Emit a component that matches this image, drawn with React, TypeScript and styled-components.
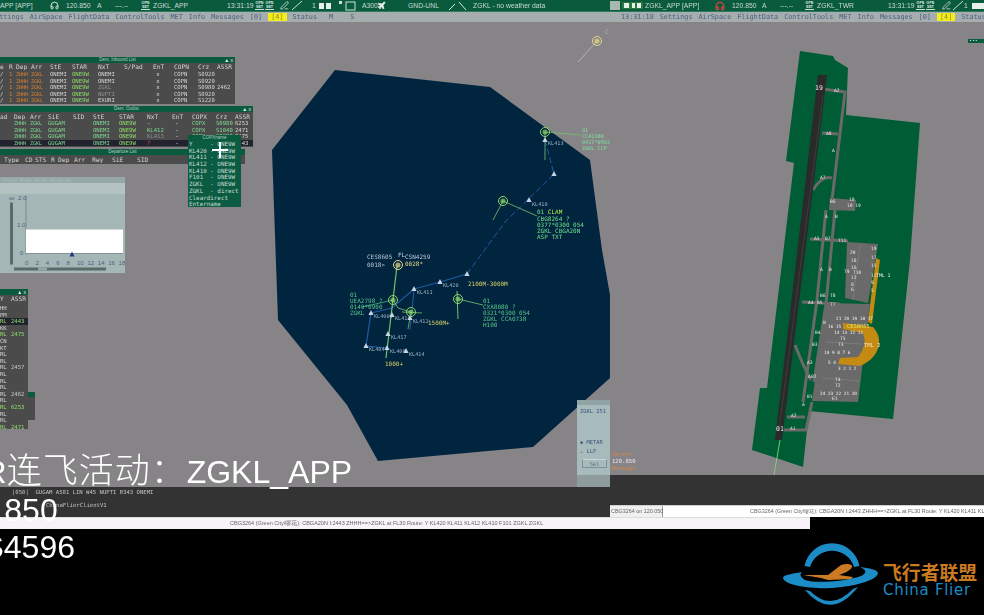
import React from "react"
import styled, { createGlobalStyle } from "styled-components"
import { Headphones, Plane, PenLine } from "lucide-react"

const MONO = `"DejaVu Sans Mono", "Liberation Mono", monospace`
const SANS = `"Liberation Sans", Arial, sans-serif`

const GlobalStyle = createGlobalStyle`
  html, body { margin: 0; padding: 0; background: #000; }
  #root { width: 984px; height: 615px; overflow: hidden; }
  * { box-sizing: border-box; }
`

const Page = styled.div`
  position: relative;
  width: 984px;
  height: 615px;
  background: #000;
  overflow: hidden;
  font-family: ${SANS};
  display: flex;
  flex-direction: column;
`
const Desktop = styled.div`
  display: flex;
  flex-direction: column;
  filter: blur(0.45px);
`
const Clients = styled.div`
  display: flex;
  height: 517px;
`
const Client = styled.div<{ $w: number }>`
  width: ${(p) => p.$w}px;
  display: flex;
  flex-direction: column;
  overflow: hidden;
`
const TopBar = styled.div`
  height: 12px;
  background: #0a5a3e;
  border-bottom: 1px solid #2f7a5f;
  display: flex;
  align-items: center;
  color: #c9dbd3;
  font-size: 6.8px;
  white-space: nowrap;
  flex: none;
`
const Cell = styled.div<{ $w: number }>`
  width: ${(p) => p.$w}px;
  flex: none;
  display: flex;
  align-items: center;
  gap: 1px;
`
const SetBadge = styled.span`
  display: inline-block;
  width: 9px;
  height: 9px;
  font-size: 3.6px;
  font-weight: bold;
  line-height: 4.2px;
  text-align: center;
  color: #dfeae5;
  border-bottom: 1px solid #d0ddd7;
`
const MenuBar = styled.div<{ $offset: number }>`
  height: 10px;
  background: #a5adae;
  display: flex;
  align-items: center;
  gap: 6px;
  padding-left: ${(p) => Math.max(p.$offset, 0)}px;
  margin-left: ${(p) => Math.min(p.$offset, 0)}px;
  font-family: ${MONO};
  font-size: 6.8px;
  color: #4d6082;
  white-space: nowrap;
  flex: none;
`
const MenuItem = styled.span<{ $hot?: boolean; $gap?: number }>`
  ${(p) => (p.$hot ? "background:#f4ec1c;color:#8a8a20;padding:0 3px;" : "")}
  ${(p) => (p.$gap ? `margin-left:${p.$gap}px;` : "")}
`
const ClockChip = styled.span`
  width: 6px;
  height: 10px;
  background: #e4e8e8;
  margin-right: 5px;
`
const Scope = styled.div`
  position: relative;
  flex: 1;
  background: #868486;
  overflow: hidden;
`
const ScopeDrawing = styled.svg`
  position: absolute;
  inset: 0;
  display: block;
  text {
    font-family: ${MONO};
    font-size: 6px;
  }
`
const FloatWin = styled.div<{ $x: number; $y: number; $w: number; $h: number; $bg?: string }>`
  position: absolute;
  left: ${(p) => p.$x}px;
  top: ${(p) => p.$y}px;
  width: ${(p) => p.$w}px;
  height: ${(p) => p.$h}px;
  background: ${(p) => p.$bg ?? "#4b4b4b"};
  display: flex;
  flex-direction: column;
  font-family: ${MONO};
  font-size: 6.3px;
  color: #dcdcdc;
  white-space: nowrap;
  overflow: hidden;
`
const WinTitle = styled.div`
  height: 6px;
  flex: none;
  background: #0a5a3e;
  color: #b7cdc4;
  font-family: ${SANS};
  font-size: 4.5px;
  line-height: 6px;
  text-align: center;
  position: relative;
`
const WinButtons = styled.span`
  position: absolute;
  right: 2px;
  top: 0;
  color: #e8e8e8;
  font-size: 5px;
`
const GridRow = styled.div<{ $cols: string; $h: number; $sel?: boolean }>`
  display: grid;
  grid-template-columns: ${(p) => p.$cols};
  height: ${(p) => p.$h}px;
  line-height: ${(p) => p.$h}px;
  flex: none;
  background: ${(p) => (p.$sel ? "#232330" : "transparent")};
`
const GridCell = styled.span<{ $c?: string; $s?: number }>`
  color: ${(p) => p.$c ?? "#d4d4d4"};
  font-size: ${(p) => p.$s ?? 5.6}px;
  overflow: hidden;
`
const HeadCell = styled.span`
  color: #d4d4d4;
  font-size: 6.2px;
  overflow: hidden;
`
const HeaderGap = styled.div<{ $h: number }>`
  height: ${(p) => p.$h}px;
  flex: none;
`
const PopupRow = styled.div`
  height: 6.7px;
  line-height: 6.7px;
  padding-left: 1px;
  font-size: 5.9px;
  color: #c7dfd2;
  white-space: pre;
`
const ChartBar = styled.div`
  height: 6px;
  background: #96a8a9;
  color: #aebcbc;
  font-size: 5px;
  line-height: 6px;
  padding-left: 2px;
  flex: none;
`
const ChartTool = styled.div`
  height: 11px;
  background: #b3c2c2;
  flex: none;
`
const ChartBody = styled.svg`
  display: block;
  flex: 1;
  text {
    font-family: ${SANS};
    font-size: 6px;
    fill: #4c5f7c;
  }
`
const Tab = styled.div`
  position: absolute;
  left: 28px;
  top: 370px;
  width: 7px;
  height: 28px;
  background: #4b4b4b;
  border-top: 5px solid #0a5a3e;
`
const SidePanel = styled.div`
  position: absolute;
  left: 577px;
  top: 378px;
  width: 33px;
  height: 87px;
  background: #a7babc;
  display: flex;
  flex-direction: column;
  font-family: ${MONO};
  font-size: 5.4px;
  color: #3d5478;
  white-space: nowrap;
  overflow: hidden;
`
const PanelHead = styled.div`
  height: 5px;
  background: #90a4a6;
  margin-bottom: 2px;
`
const PanelLine = styled.div<{ $mt?: number }>`
  margin-top: ${(p) => p.$mt ?? 0}px;
  padding-left: 3px;
  line-height: 9px;
`
const SelButton = styled.div`
  margin: 3px 3px 0 5px;
  height: 9px;
  border: 1px solid #7e9294;
  border-top-color: #c8d5d6;
  text-align: center;
  line-height: 8px;
  color: #5e7476;
`
const PanelFoot = styled.div`
  margin-top: auto;
  height: 12px;
  background: #8f9c9e;
`
const ServerNote = styled.div`
  position: absolute;
  left: 2px;
  bottom: 3px;
  font-family: ${MONO};
  font-size: 5.6px;
  line-height: 7px;
  color: #d98a4a;
`
const ServerFreq = styled.div`
  color: #e8e8e8;
`
const Corner = styled.div`
  position: absolute;
  right: 0;
  top: 17px;
  width: 16px;
  height: 4px;
  background: #0a5a3e;
  color: #d8e8e0;
  font-size: 4px;
  line-height: 4px;
  letter-spacing: 1.5px;
  padding-left: 2px;
`
const CommandBar = styled.div<{ $h: number }>`
  height: ${(p) => p.$h}px;
  background: #333333;
  flex: none;
  font-family: ${MONO};
  font-size: 5.6px;
  color: #c4c4c4;
  white-space: pre;
  display: flex;
  flex-direction: column;
`
const CommandLine = styled.div<{ $pad: number; $mt?: number }>`
  padding-left: ${(p) => p.$pad}px;
  margin-top: ${(p) => p.$mt ?? 0}px;
  line-height: 7px;
`
const InputStrip = styled.div`
  height: 12px;
  background: #fff;
  border-top: 1px solid #cfcfcf;
  display: flex;
  align-items: center;
  font-size: 5.4px;
  color: #666;
  white-space: nowrap;
  flex: none;
`
const StripLabel = styled.div`
  width: 53px;
  padding-left: 1px;
  border-right: 1px solid #999;
  height: 100%;
  line-height: 10px;
  background: #f0f0f0;
  flex: none;
`
const StripBlank = styled.div`
  width: 87px;
  flex: none;
`
const BottomStrip = styled.div`
  width: 810px;
  height: 12px;
  background: #f7f3f8;
  border-top: 1px solid #ddd;
  font-size: 5.5px;
  line-height: 11px;
  color: #666;
  padding-left: 230px;
  white-space: nowrap;
  flex: none;
  overflow: hidden;
  filter: blur(0.45px);
`
const Footer = styled.div`
  flex: 1;
  display: flex;
  justify-content: flex-end;
  align-items: flex-start;
  padding: 13px 7px 0 0;
  gap: 4px;
`
const LogoText = styled.div`
  display: flex;
  flex-direction: column;
  margin-top: 19px;
`
const LogoCn = styled.div`
  font-family: "Noto Sans CJK SC", sans-serif;
  font-weight: 700;
  font-size: 18.8px;
  line-height: 21px;
  color: #c97a22;
`
const LogoEn = styled.div`
  font-family: "DejaVu Sans", sans-serif;
  font-size: 15px;
  line-height: 16px;
  letter-spacing: 0.7px;
  color: #1b8cc6;
`
const Captions = styled.div`
  position: absolute;
  left: 0;
  top: 454px;
  font-family: ${SANS}, "Noto Sans CJK SC";
  font-size: 32px;
  line-height: 37.5px;
  color: #fff;
  font-weight: 300;
  white-space: nowrap;
`
const Caption = styled.div<{ $x: number }>`
  margin-left: ${(p) => p.$x}px;
  height: 37.5px;
`
const CaptionCjk = styled.span`
  font-size: 35px;
  letter-spacing: 1px;
  line-height: 0;
`
const Crosshair = styled.svg`
  position: absolute;
  left: 212px;
  top: 120px;
`

const W = "#d6d6d6"
const O = "#d9802c"
const G = "#8ede68"
const M = "#7edc93"
const D = "#8f8f8f"

const colsA = "9px 7px 15px 19px 22px 26px 26px 29px 21px 24px 19px 18px"
const headA = ["e", "R", "Dep", "Arr", "StE", "STAR", "NxT", "S/Pad", "EnT", "COPN", "Crz", "ASSR"]
const rowsA: [string, string, string, string, string, string][] = [
  ["ONEMI", "ONE9W", "ONEMI", "S0920", "", W],
  ["ONEMI", "ONE9W", "ONEMI", "S0920", "", W],
  ["ONEMI", "ONE9W", "ZGKL", "S0980", "2462", D],
  ["ONEMI", "ONE9W", "NUPTI", "S0920", "", D],
  ["ONEMI", "ONE9W", "EXURI", "S1220", "", W],
]

const colsB = "14px 16px 18px 25px 20px 26px 28px 25px 20px 24px 19px 18px"
const headB = ["ad", "Dep", "Arr", "SiE", "SID", "StE", "STAR", "NxT", "EnT", "COPX", "Crz", "ASSR"]
const rowsB = [
  { nxt: "-", nxtC: W, crz: "S0980", assr: "6253" },
  { nxt: "KL412", nxtC: M, crz: "S1040", assr: "2471" },
  { nxt: "KL413", nxtC: D, crz: "S0980", assr: "2475" },
  { nxt: "?", nxtC: "#d8434a", crz: "", assr: "2443" },
]

const colsC = "4px 21px 10px 16px 7px 16px 18px 20px 25px 23px"
const headC = ["", "Type", "CD", "STS", "R", "Dep", "Arr", "Rwy", "SiE", "SID"]

const popupItems = [
  "Y     - ONE9W",
  "KL420 - ONE9W",
  "KL411 - ONE9W",
  "KL412 - ONE9W",
  "KL410 - ONE9W",
  "F101  - ONE9W",
  "ZGKL  - ONE9W",
  "ZGKL  - direct",
  "Cleardirect",
  "Entername",
]

const sideRows: [string, string, string?][] = [
  ["HH", ""], ["PM", ""], ["RL", "2443", G], ["KK", ""], ["RL", "2475", G], ["CN", ""], ["KT", ""],
  ["RL", ""], ["RL", ""], ["RL", "2457"], ["RL", ""], ["RL", ""], ["RL", ""], ["RL", "2462"], ["RL", ""],
  ["RL", "6253", G], ["RL", ""], ["RL", ""], ["RL", "2471", G],
]

type Wp = [number, number, string?, number?, number?]
const waypoints: Wp[] = [
  [467, 274], [440, 282, "KL420", 3, 5], [414, 289, "KL411", 3, 5], [371, 313, "KL4000", 3, 5],
  [366, 346, "KL404", 3, 5], [388, 334, "KL417", 3, 5], [387, 348, "KL406", 3, 5], [406, 351, "KL414", 3, 5],
  [392, 315, "KL410", 3, 5], [410, 318, "KL412", 3, 5], [554, 174], [529, 200, "KL410", 3, 6], [545, 140, "KL413", 3, 5],
]

function Waypoint({ x, y, label, dx = 3, dy = 5 }: { x: number; y: number; label?: string; dx?: number; dy?: number }) {
  return (
    <g>
      <polygon points={`${x},${y - 3} ${x + 2.6},${y + 2} ${x - 2.6},${y + 2}`} fill="#c8d4e4" />
      {label && <text x={x + dx} y={y + dy} fill="#9fb4c8" style={{ fontSize: 5.2 }}>{label}</text>}
    </g>
  )
}

function Target({ x, y, color = "#8fd66a" }: { x: number; y: number; color?: string }) {
  return (
    <g>
      <circle cx={x} cy={y} r={4.5} fill="none" stroke={color} strokeWidth={1} />
      <circle cx={x} cy={y} r={2.6} fill={color} opacity={0.7} />
    </g>
  )
}

function Tag({ x, y, lines, color = "#59c38a", pitch = 6.1, size = 6 }: { x: number; y: number; lines: string[]; color?: string; pitch?: number; size?: number }) {
  return (
    <>
      {lines.map((l, i) => (
        <text key={i} x={x} y={y + i * pitch} fill={color} style={{ fontSize: size }}>{l}</text>
      ))}
    </>
  )
}

function RadarMap() {
  return (
    <ScopeDrawing width={610} height={465} viewBox="0 22 610 465">
      <polygon points="335,70 490,87 590,160 602,250 610,295 610,378 533,447 378,461 347,405 278,320 272,150" fill="#02253f" />
      {/* routes */}
      <polyline points="545,140 554,174 505,222 467,274" fill="none" stroke="#1e5aa6" strokeWidth={1} strokeDasharray="6 3" />
      <polyline points="467,274 440,282 414,289 392,308 371,313 366,346 387,348" fill="none" stroke="#1e5aa6" strokeWidth={1.2} />
      <polyline points="414,289 410,330" fill="none" stroke="#1e5aa6" strokeWidth={1} />
      <polyline points="598,40 578,62" fill="none" stroke="#c8c8c8" strokeWidth={0.7} />
      {/* localiser and vectors */}
      <line x1={397} y1={266} x2={386} y2={358} stroke="#74c46c" strokeWidth={1.2} />
      <line x1={393} y1={300} x2={362} y2={307} stroke="#48b878" strokeWidth={0.8} />
      <polyline points="393,300 398,308 411,312" fill="none" stroke="#74c46c" strokeWidth={0.8} />
      <line x1={402} y1={312} x2={422} y2={313} stroke="#74c46c" strokeWidth={0.8} />
      <line x1={411} y1={312} x2={408} y2={329} stroke="#74c46c" strokeWidth={0.8} />
      <line x1={457} y1={291} x2={458} y2={319} stroke="#74c46c" strokeWidth={1} />
      <line x1={458} y1={299} x2={483} y2={305} stroke="#74c46c" strokeWidth={0.8} />
      <line x1={503} y1={201} x2={493} y2={220} stroke="#74c46c" strokeWidth={0.8} />
      <line x1={503} y1={201} x2={537} y2={216} stroke="#74c46c" strokeWidth={0.8} />
      <line x1={545} y1={132} x2={545} y2={160} stroke="#74c46c" strokeWidth={0.8} />
      <line x1={545} y1={132} x2={581} y2={135} stroke="#74c46c" strokeWidth={0.8} />
      {waypoints.map(([x, y, label, dx, dy], i) => (
        <Waypoint key={i} x={x} y={y} label={label} dx={dx} dy={dy} />
      ))}
      <Target x={393} y={300} />
      <Target x={411} y={312} />
      <Target x={458} y={299} />
      <Target x={503} y={201} />
      <Target x={545} y={132} />
      <Target x={398} y={265} color="#e8d98a" />
      <Target x={597} y={41} color="#e6d888" />
      <text x={605} y={34} fill="#b0b0b0">C</text>
      <text x={398} y={257} fill="#cfd8e6">FL</text>
      <Tag x={367} y={259} color="#b9c8d8" pitch={8} lines={["CES8605", "0018>"]} />
      <Tag x={405} y={259} color="#b9c8d8" pitch={8} lines={["CSN4259", ""]} />
      <text x={405} y={266} fill="#e8dc8a">0028*</text>
      <Tag x={350} y={297} lines={["01", "UEA2798 ?", "0149*0900", "ZGKL"]} />
      <Tag x={483} y={303} lines={["01", "CXA8080 ?", "0321*0300 054", "ZGKL CCA0738", "H100"]} />
      <Tag x={582} y={132} color="#7fe0a0" size={5.2} lines={["01", "CCA1388", "0417*0592", "ZGKL CCP"]} />
      <text x={537} y={214} fill="#6fe08a">01 <tspan fill="#b6f04a">CLAM</tspan></text>
      <Tag x={537} y={221} color="#6fe08a" lines={["CBG8264 ?", "0377*0300 054", "ZGKL CBGA20N", "ASP TXT"]} />
      <text x={468} y={286} fill="#d8d264">2100M-3000M</text>
      <text x={428} y={325} fill="#d8d264">1500M+</text>
      <text x={385} y={366} fill="#d8d264">1000+</text>
    </ScopeDrawing>
  )
}

function AirportMap() {
  const labels: [number, number, string][] = [
    [834, 92, "A2"], [826, 135, "A8"], [832, 152, "A"], [820, 179, "A7"], [830, 203, "B6"], [849, 201, "10"], [847, 207, "10 19"],
    [825, 218, "A"], [835, 218, "B"], [814, 240, "A5"], [825, 240, "B7"], [838, 242, "T11"], [871, 250, "19"], [850, 254, "20"],
    [871, 259, "17"], [851, 262, "18"], [871, 267, "15"], [851, 269, "16"], [820, 271, "A"], [829, 271, "B"], [844, 273, "T9"], [853, 274, "T10"],
    [851, 279, "12"], [871, 277, "11"], [851, 286, "8"], [871, 284, "9"], [851, 291, "6"], [871, 292, "5"],
    [820, 297, "B6"], [830, 297, "T8"], [808, 304, "A4"], [817, 304, "B5"], [830, 306, "T7"], [823, 324, "B"], [815, 334, "B4"], [840, 340, "T5"],
    [812, 346, "B3"], [838, 346, "T3"], [807, 364, "A3"], [808, 378, "A"], [811, 378, "B2"], [835, 381, "T4"], [835, 387, "T2"], [807, 398, "B1"],
    [832, 400, "E1"], [802, 406, "A"], [791, 417, "A2"], [790, 430, "A1"],
  ]
  const stands: [number, number, string][] = [
    [836, 320, "21 20 19 18 17"], [828, 328, "16 15"], [834, 334, "14 13 12 11"], [824, 354, "10 9 8 7 6"], [828, 364, "5 4"], [838, 370, "3 2 1 2"], [820, 395, "24 23 22 21 20"],
  ]
  return (
    <ScopeDrawing width={374} height={453} viewBox="610 22 374 453">
      <polygon
        points="800,51 833,56 835,60 848,68 846,115 920,123 910,260 893,419 809,411 803,467 752,450 760,388 767,388 794,163 786,161"
        fill="#005c34"
      />
      {/* taxiways and aprons */}
      <g fill="none" stroke="#6a6a6a" strokeWidth={3}>
        <polyline points="816,88 845,92 832,200" />
        <line x1={822} y1={133} x2={838} y2={134} />
        <path d="M813,190 Q822,175 832,178" />
        <polyline points="826,210 817,300 803,402" />
        <polyline points="835,210 826,304 814,382" />
        <line x1={810} y1={239} x2={848} y2={241} />
        <line x1={802} y1={302} x2={840} y2={304} />
        <path d="M795,345 Q805,370 811,380" />
        <polyline points="812,402 806,430 784,430" />
        <line x1={787} y1={417} x2={805} y2={417} />
      </g>
      <polygon points="830,198 856,200 855,211 829,210" fill="#6a6a6a" />
      <polygon points="847,242 878,244 868,303 845,298" fill="#6a6a6a" />
      <polygon points="826,303 870,304 858,402 812,401" fill="#6a6a6a" />
      <g stroke="#8a8a8a" strokeWidth={0.5}>
        <line x1={860} y1={245} x2={853} y2={300} />
        <line x1={826} y1={342} x2={862} y2={344} />
        <line x1={822} y1={378} x2={860} y2={381} />
      </g>
      {/* runway */}
      <polygon points="818,75 827,75 782,440 775,440" fill="#2a2a2a" />
      <line x1={823} y1={95} x2={779} y2={430} stroke="#3d3d3d" strokeWidth={1} />
      {/* terminals */}
      <polygon points="876,258 880,260 872,324 868,322" fill="#c48a12" />
      <path d="M843,323 L873,327 Q880,335 879,343 Q878,358 860,366 L838,364 L840,358 L858,357 Q868,345 863,333 L843,329 Z" fill="#c48a12" />
      {labels.map(([x, y, t], i) => (
        <text key={i} x={x} y={y} fill="#e4e4e4" style={{ fontSize: 4.6 }}>{t}</text>
      ))}
      {stands.map(([x, y, t], i) => (
        <text key={i} x={x} y={y} fill="#f0f0f0" style={{ fontSize: 4.4 }}>{t}</text>
      ))}
      <text x={815} y={90} fill="#e8e8e8" style={{ fontSize: 6.5 }}>19</text>
      <text x={776} y={431} fill="#e8e8e8" style={{ fontSize: 6.5 }}>01</text>
      <text x={876} y={277} fill="#e8e8e8" style={{ fontSize: 4.8 }}>TML 1</text>
      <text x={864} y={347} fill="#f4e8c0" style={{ fontSize: 5.4 }}>TML 2</text>
      <text x={847} y={328} fill="#e8e860" style={{ fontSize: 5.4 }}>CES8665</text>
      <line x1={780} y1={440} x2={774} y2={475} stroke="#7fd47a" strokeWidth={0.9} />
    </ScopeDrawing>
  )
}

function TrackChart() {
  const ticks = [0, 2, 4, 6, 8, 10, 12, 14, 16, 18]
  return (
    <ChartBody width={125} height={78} viewBox="0 194 125 78">
      <rect x={10} y={202} width={3} height={62} fill="#5d6a6a" />
      <text x={9} y={199} style={{ fontSize: 4 }}>kM</text>
      <line x1={26} y1={195} x2={26} y2={254} stroke="#6e8080" strokeWidth={0.8} />
      <rect x={26} y={229} width={97} height={24} fill="#fff" />
      <line x1={26} y1={253} x2={123} y2={253} stroke="#6e8080" strokeWidth={0.8} />
      <text x={18} y={199}>2.0</text>
      <text x={17} y={226}>1.0</text>
      <text x={20} y={254}>0</text>
      {ticks.map((t) => (
        <text key={t} x={25 + t * 5.2} y={264}>{t}</text>
      ))}
      <polygon points="72,251 74.5,256 69.5,256" fill="#23308a" />
      <rect x={14} y={267} width={92} height={3} fill="#5d6a6a" />
      <rect x={38} y={267} width={9} height={3} fill="#94a6a6" />
    </ChartBody>
  )
}

function TopCells({ items }: { items: [number, React.ReactNode][] }) {
  return (
    <>
      {items.map(([w, node], i) => (
        <Cell key={i} $w={w}>{node}</Cell>
      ))}
    </>
  )
}

const setBadge = <SetBadge>OPN<br />SET</SetBadge>

const leftTop: [number, React.ReactNode][] = [
  [50, "APP [APP]"],
  [16, <Headphones size={9} color="#e8f0ec" strokeWidth={2.4} />],
  [31, "120.850"],
  [18, "A"],
  [26, "---.--"],
  [12, setBadge],
  [74, "ZGKL_APP"],
  [28, "13:31:19"],
  [10, setBadge],
  [15, setBadge],
  [11, <PenLine size={9} color="#dfe8e4" />],
  [21, <svg width="12" height="11"><path d="M1 10 L11 1" stroke="#cfe0d8" strokeWidth="1" /></svg>],
  [7, "1"],
  [19, <svg width="12" height="6"><rect x="0" y="0" width="12" height="6" fill="#e8f0ec" /><rect x="5" y="0" width="2" height="6" fill="#0a5a3e" /></svg>],
  [24, <svg width="22" height="11"><rect x="1" y="1" width="3" height="3" fill="#cfe0d8" /><rect x="8" y="2" width="9" height="8" fill="none" stroke="#cfe0d8" /></svg>],
  [15, "A300"],
  [31, <Plane size={9} color="#e8f0ec" fill="#e8f0ec" />],
  [40, "GND-UNL"],
  [25, <svg width="20" height="11"><path d="M1 10 L7 4 M11 2 L18 10" stroke="#dfe8e4" strokeWidth="1" /></svg>],
  [137, "ZGKL - no weather data"],
]

const rightTop: [number, React.ReactNode][] = [
  [12, <svg width="10" height="9"><rect width="10" height="9" fill="#a8b8b0" /></svg>],
  [23, <svg width="22" height="9"><rect x="0" y="1" width="21" height="7" fill="#2a7a40" /><rect x="2" y="2" width="5" height="5" fill="#e4f0e8" /><rect x="10" y="2" width="3" height="5" fill="#e4f0e8" /><rect x="15" y="2" width="4" height="5" fill="#e4f0e8" /></svg>],
  [70, "ZGKL_APP [APP]"],
  [17, <Headphones size={10} color="#d8434a" strokeWidth={3} />],
  [30, "120.850"],
  [18, "A"],
  [25, "---.--"],
  [12, setBadge],
  [71, "ZGKL_TWR"],
  [28, "13:31:19"],
  [10, setBadge],
  [16, setBadge],
  [10, <PenLine size={9} color="#dfe8e4" />],
  [12, <svg width="12" height="11"><path d="M1 10 L11 1" stroke="#cfe0d8" strokeWidth="1" /></svg>],
  [8, "1"],
  [12, <svg width="12" height="6"><rect width="12" height="6" fill="#e8f0ec" /></svg>],
]

const menuNames = ["AirSpace", "FlightData", "ControlTools", "MET", "Info", "Messages"]

function Menu() {
  return (
    <>
      {menuNames.map((m) => <MenuItem key={m}>{m}</MenuItem>)}
      <MenuItem>[0]</MenuItem>
      <MenuItem $hot>[4]</MenuItem>
      <MenuItem>Status</MenuItem>
      <MenuItem $gap={6}>M</MenuItem>
      <MenuItem $gap={11}>S</MenuItem>
    </>
  )
}

const statusLine = "CBG3264 (Green City/\u7F2A\u82B1): CBGA20N I:2443 ZHHH==>ZGKL at FL30 Route: Y KL420 KL411 KL412 KL410 F101 ZGKL ZGKL"

function FlightLists() {
  return (
    <>
      <FloatWin $x={0} $y={35} $w={235} $h={47}>
        <WinTitle>Dem. Inbound List<WinButtons>▲ x</WinButtons></WinTitle>
        <GridRow $cols={colsA} $h={7}>{headA.map((h) => <HeadCell key={h}>{h}</HeadCell>)}</GridRow>
        <HeaderGap $h={1} />
        {rowsA.map((r, i) => (
          <GridRow key={i} $cols={colsA} $h={6.6}>
            <GridCell>/</GridCell>
            <GridCell $c={O}>1</GridCell>
            <GridCell $c={O} $s={5}>ZHHH</GridCell>
            <GridCell $c={O} $s={5}>ZGKL</GridCell>
            <GridCell>{r[0]}</GridCell>
            <GridCell $c={G}>{r[1]}</GridCell>
            <GridCell $c={r[5]}>{r[2]}</GridCell>
            <GridCell />
            <GridCell>&nbsp;x</GridCell>
            <GridCell>COPN</GridCell>
            <GridCell>{r[3]}</GridCell>
            <GridCell>{r[4]}</GridCell>
          </GridRow>
        ))}
      </FloatWin>
      <FloatWin $x={0} $y={84} $w={253} $h={41}>
        <WinTitle>Dem. Outlist<WinButtons>▲ x</WinButtons></WinTitle>
        <HeaderGap $h={1} />
        <GridRow $cols={colsB} $h={7}>{headB.map((h) => <HeadCell key={h}>{h}</HeadCell>)}</GridRow>
        {rowsB.map((r, i) => (
          <GridRow key={i} $cols={colsB} $h={6.6} $sel={i === 3}>
            <GridCell />
            <GridCell $c={M} $s={5}>ZHHH</GridCell>
            <GridCell $c={M} $s={5}>ZGKL</GridCell>
            <GridCell $c={M}>GUGAM</GridCell>
            <GridCell />
            <GridCell $c={M}>ONEMI</GridCell>
            <GridCell $c={G}>ONE9W</GridCell>
            <GridCell $c={r.nxtC}>{r.nxt}</GridCell>
            <GridCell>&nbsp;-</GridCell>
            <GridCell $c={M}>COPX</GridCell>
            <GridCell $c={M}>{r.crz}</GridCell>
            <GridCell>{r.assr}</GridCell>
          </GridRow>
        ))}
      </FloatWin>
      <FloatWin $x={0} $y={127} $w={245} $h={15}>
        <WinTitle>Departure List</WinTitle>
        <HeaderGap $h={1} />
        <GridRow $cols={colsC} $h={7}>{headC.map((h, i) => <HeadCell key={i}>{h}</HeadCell>)}</GridRow>
      </FloatWin>
      <FloatWin $x={188} $y={113} $w={53} $h={72} $bg="#0b5a42">
        <WinTitle>COPXname</WinTitle>
        {popupItems.map((p) => <PopupRow key={p}>{p}</PopupRow>)}
      </FloatWin>
      <Crosshair width="16" height="16" viewBox="0 0 16 16">
        <path d="M8 0 V16 M0 8 H16" stroke="#fff" strokeWidth="2" />
      </Crosshair>
      <FloatWin $x={0} $y={155} $w={125} $h={96} $bg="#a4b6b6">
        <ChartBar>Track Mode Risk Display</ChartBar>
        <ChartTool />
        <TrackChart />
      </FloatWin>
      <FloatWin $x={0} $y={267} $w={28} $h={140}>
        <WinTitle><WinButtons>▲ x</WinButtons></WinTitle>
        <GridRow $cols="11px 17px" $h={7}><HeadCell>Y</HeadCell><HeadCell>ASSR</HeadCell></GridRow>
        <HeaderGap $h={3} />
        {sideRows.map(([a, b, c], i) => (
          <GridRow key={i} $cols="11px 17px" $h={6.6} $sel={i === 2}>
            <GridCell $c={c}>{a}</GridCell>
            <GridCell $c={c ?? "#c8c8c8"}>{b}</GridCell>
          </GridRow>
        ))}
      </FloatWin>
      <Tab />
    </>
  )
}

function Logo() {
  return (
    <svg width="96" height="66" viewBox="0 0 96 66">
      <path d="M21.5,24 A28 28 0 0 1 76.5,24 L71,25 A23 23 0 0 0 27,25 Z" fill="#1b8cc6" />
      <path d="M22,48 Q48,79 75,45 L70,47 Q48,70 27,49 Z" fill="#1b8cc6" />
      <path d="M19,30 C8,32 0,33 0,36 C2,44 30,47 48,46 C70,45 95,38 95,31 C95,28 86,26 77,25 C84,28 84,31 78,34 C65,39 32,42 22,38 C18,35 16,33 19,30 Z" fill="#1b8cc6" />
      <path d="M20,33 L45,33 L58,23 C64,21 70,22 69,25 C68,28 62,31 56,33 L70,35 L68,37 L45,38 L38,36 Z" fill="#c97a22" />
    </svg>
  )
}

export default function App() {
  return (
    <Page>
      <GlobalStyle />
      <Desktop>
        <Clients>
          <Client $w={610}>
            <TopBar><TopCells items={leftTop} /></TopBar>
            <MenuBar $offset={-9}>
              <MenuItem>Settings</MenuItem>
              <Menu />
            </MenuBar>
            <Scope>
              <RadarMap />
              <FlightLists />
              <SidePanel>
                <PanelHead />
                <PanelLine>ZGKL 251</PanelLine>
                <PanelLine $mt={22}>◆ METAR</PanelLine>
                <PanelLine>⌵ LLF</PanelLine>
                <SelButton>Sel</SelButton>
                <PanelFoot />
              </SidePanel>
            </Scope>
            <CommandBar $h={30}>
              <CommandLine $pad={12} $mt={2}>|050|  GUGAM A581 LIN W45 NUPTI R343 ONEMI</CommandLine>
              <CommandLine $pad={46} $mt={6}>ChinaFlierClientV1</CommandLine>
            </CommandBar>
          </Client>
          <Client $w={374}>
            <TopBar><TopCells items={rightTop} /></TopBar>
            <MenuBar $offset={0}>
              <ClockChip />
              <MenuItem>13:31:18</MenuItem>
              <MenuItem>Settings</MenuItem>
              <Menu />
            </MenuBar>
            <Scope>
              <AirportMap />
              <Corner>▪▪▪</Corner>
              <ServerNote>
                Server
                <ServerFreq>120.850</ServerFreq>
                Message
              </ServerNote>
            </Scope>
            <CommandBar $h={30} />
            <InputStrip>
              <StripLabel>CBG3264 on 120.050</StripLabel>
              <StripBlank />
              {statusLine}
            </InputStrip>
          </Client>
        </Clients>
      </Desktop>
      <BottomStrip>{statusLine}</BottomStrip>
      <Footer>
        <Logo />
        <LogoText>
          <LogoCn>飞行者联盟</LogoCn>
          <LogoEn>China Flier</LogoEn>
        </LogoText>
      </Footer>
      <Captions>
        <Caption $x={-36}>FR<CaptionCjk>连飞活动：</CaptionCjk>ZGKL_APP</Caption>
        <Caption $x={-58}>120.850</Caption>
        <Caption $x={-62}>CES4596</Caption>
      </Captions>
    </Page>
  )
}
